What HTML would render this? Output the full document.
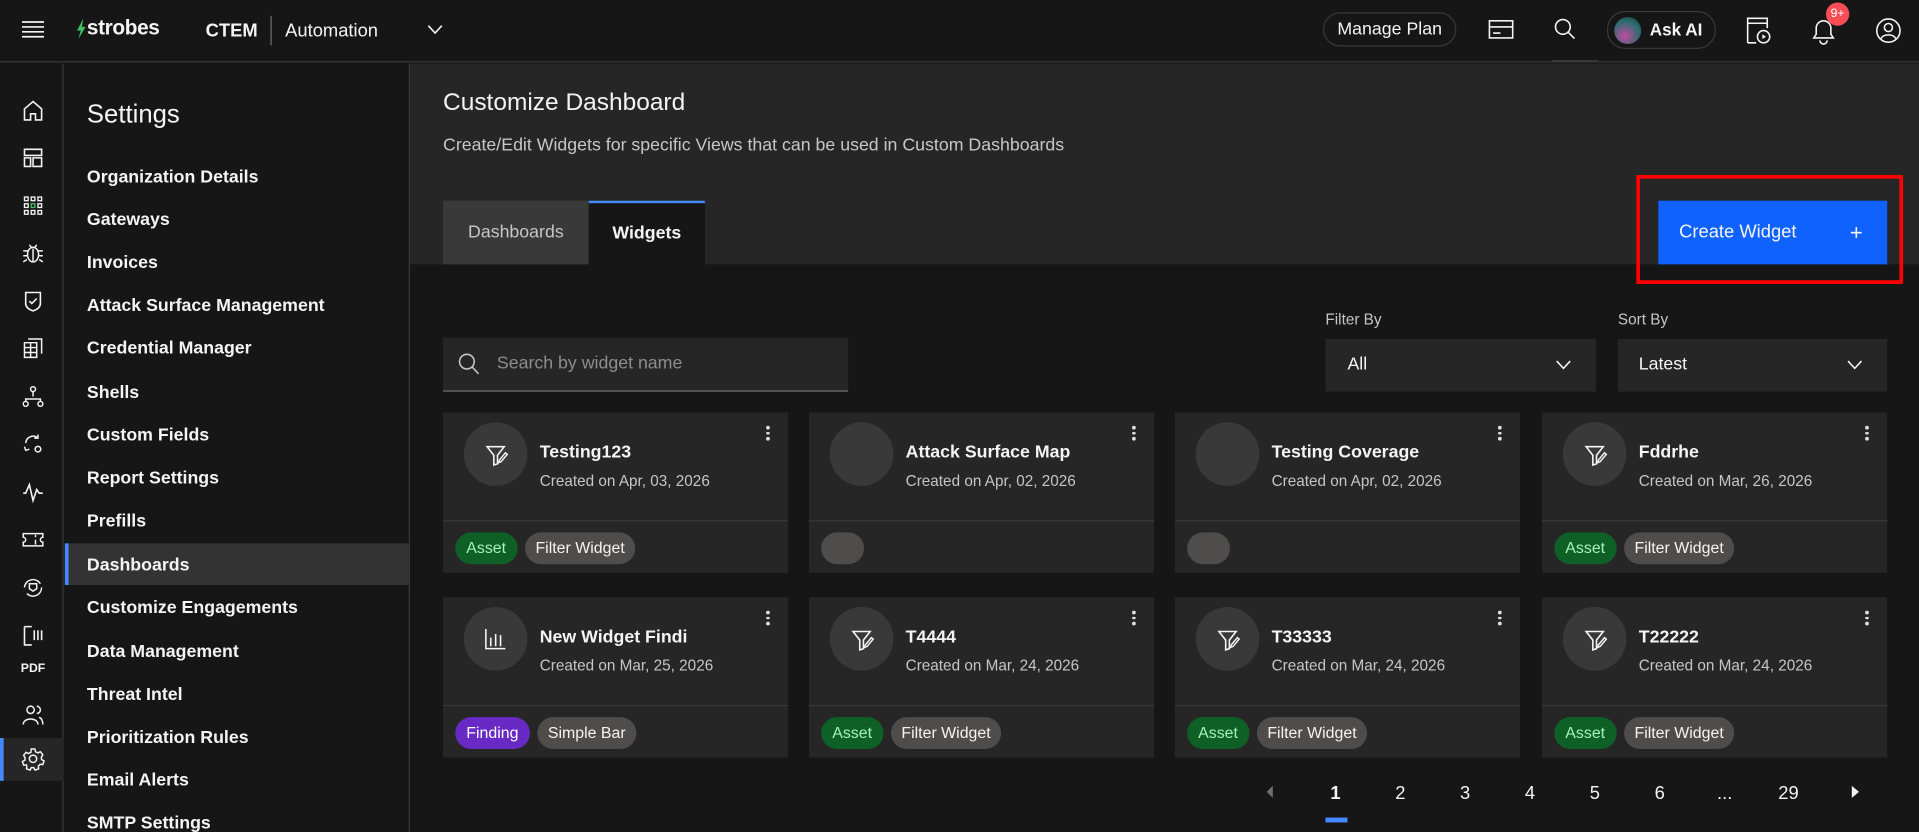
<!DOCTYPE html>
<html><head><meta charset="utf-8"><style>
*{box-sizing:border-box;margin:0;padding:0}
html,body{width:1919px;height:832px;overflow:hidden;background:#161616}
#r{position:absolute;left:0;top:0;width:1568px;height:680px;transform:scale(1.22385);transform-origin:0 0;font-family:"Liberation Sans",sans-serif;color:#f4f4f4;background:#161616;overflow:hidden}
.a{position:absolute}
.top{left:0;top:0;width:1568px;height:51px;background:#161616;border-bottom:1px solid #393939}
.rail{left:0;top:52px;width:52px;height:628px;border-right:1px solid #393939}
.side{left:53px;top:52px;width:282px;height:628px;border-right:1px solid #393939}
.item{position:absolute;left:18px;font-size:14.5px;font-weight:bold;color:#f4f4f4}
.ic{position:absolute;left:17px;width:20px;height:20px}
.card{position:absolute;width:282px;height:131px;background:#262626}
.card .div{position:absolute;left:0;top:88px;width:100%;height:1px;background:#393939}
.circ{position:absolute;left:17px;top:8px;width:52px;height:52px;border-radius:50%;background:#393939}
.ti{position:absolute;left:79px;top:25px;font-size:14.5px;font-weight:bold}
.dt{position:absolute;left:79px;top:49px;font-size:12.5px;color:#c6c6c6}
.kb{position:absolute;right:15px;top:11px;width:3px}
.kb i{display:block;width:2.5px;height:2.5px;background:#e0e0e0;border-radius:50%;margin-bottom:2px}
.tags{position:absolute;left:10px;top:98px}
.tag{display:inline-block;height:26px;line-height:26px;border-radius:13px;padding:0 9px;font-size:13px;margin-right:6px;vertical-align:top}
.as{background:#0e6027;color:#a7f0ba}.fw{background:#4f4c4c;color:#f4f4f4}.fi{background:#6929c4;color:#fff}.em{background:#4f4c4c;width:35px}
.pg{position:absolute;top:640px;font-size:15px;color:#f4f4f4}
</style></head><body><div id="r">
<div class="a top"></div>
<svg class="a" style="left:17px;top:16px" width="20" height="16" viewBox="0 0 20 16"><path d="M1 2h18M1 6h18M1 10h18M1 14h18" stroke="#f4f4f4" stroke-width="1.4"/></svg>
<svg class="a" style="left:62px;top:15px" width="9" height="17" viewBox="0 0 9 17"><path d="M6 0L1 10h3l-2 7 6-10H5z" fill="#42be65"/></svg>
<div class="a" style="left:71px;top:13px;font-size:17px;font-weight:bold;letter-spacing:-0.3px">strobes</div>
<div class="a" style="left:168px;top:17px;font-size:15px;font-weight:bold">CTEM</div>
<div class="a" style="left:221px;top:13px;width:1px;height:24px;background:#6f6f6f"></div>
<div class="a" style="left:233px;top:17px;font-size:15px">Automation</div>
<svg class="a" style="left:349px;top:20px" width="13" height="9"><path d="M1 1l5.5 6L12 1" stroke="#f4f4f4" fill="none" stroke-width="1.3"/></svg>
<div class="a" style="left:1081px;top:10px;width:109px;height:28px;border:1px solid #393939;border-radius:14px;font-size:14.5px;line-height:26px;text-align:center">Manage Plan</div>
<svg class="a" style="left:1216px;top:15px" width="21" height="18"><rect x="1" y="2" width="19" height="14" fill="none" stroke="#f4f4f4" stroke-width="1.3"/><path d="M1 7h19M4 12h6" stroke="#f4f4f4" stroke-width="1.3"/></svg>
<svg class="a" style="left:1269px;top:14px" width="20" height="20"><circle cx="8" cy="8" r="6" fill="none" stroke="#f4f4f4" stroke-width="1.3"/><path d="M12.5 12.5l5 5" stroke="#f4f4f4" stroke-width="1.3"/></svg>
<div class="a" style="left:1268px;top:49px;width:38px;height:2px;background:#393939"></div>
<div class="a" style="left:1313px;top:9px;width:89px;height:31px;border:1px solid #393939;border-radius:15px"></div>
<div class="a" style="left:1319px;top:14px;width:22px;height:22px;border-radius:50%;background:radial-gradient(circle at 40% 70%,#c04ba0,#2a6d6f 60%,#1d3b40)"></div>
<div class="a" style="left:1348px;top:16px;font-size:14px;font-weight:bold">Ask AI</div>
<svg class="a" style="left:1426px;top:13px" width="22" height="24"><path d="M2 22V2h16v8M2 6h16M2 22h7" stroke="#f4f4f4" fill="none" stroke-width="1.3"/><circle cx="15" cy="17" r="5" fill="none" stroke="#f4f4f4" stroke-width="1.3"/><path d="M14 15v4l3-2z" fill="#f4f4f4"/></svg>
<svg class="a" style="left:1479px;top:13px" width="22" height="24"><path d="M3 18h16l-2-3V10a6 6 0 0 0-12 0v5z" stroke="#f4f4f4" fill="none" stroke-width="1.3"/><path d="M8 20a3 3 0 0 0 6 0" stroke="#f4f4f4" fill="none" stroke-width="1.3"/></svg>
<div class="a" style="left:1492px;top:2px;width:19px;height:19px;border-radius:50%;background:#fa4d56;font-size:10px;line-height:19px;text-align:center;color:#fff">9+</div>
<svg class="a" style="left:1532px;top:14px" width="22" height="22"><circle cx="11" cy="11" r="9.5" fill="none" stroke="#f4f4f4" stroke-width="1.3"/><circle cx="11" cy="8.5" r="3.3" fill="none" stroke="#f4f4f4" stroke-width="1.3"/><path d="M5 17.5c2-4 10-4 12 0" stroke="#f4f4f4" fill="none" stroke-width="1.3"/></svg>

<div class="a rail">
<svg class="ic" style="top:28px" viewBox="0 0 20 20"><path d="M3 9l7-6 7 6v9H12v-5H8v5H3z" fill="none" stroke="#f4f4f4" stroke-width="1.3"/></svg>
<svg class="ic" style="top:67px" viewBox="0 0 20 20"><path d="M3 3h14v5H3zM3 10h5v7H3zM10 10h7v7h-7z" fill="none" stroke="#f4f4f4" stroke-width="1.3"/></svg>
<svg class="ic" style="top:106px" viewBox="0 0 20 20"><g fill="none" stroke="#f4f4f4" stroke-width="1.1"><rect x="3" y="3" width="3" height="3"/><rect x="8.5" y="3" width="3" height="3"/><rect x="14" y="3" width="3" height="3"/><rect x="3" y="8.5" width="3" height="3"/><rect x="8.5" y="8.5" width="3" height="3" stroke="#42be65"/><rect x="14" y="8.5" width="3" height="3"/><rect x="3" y="14" width="3" height="3"/><rect x="8.5" y="14" width="3" height="3"/><rect x="14" y="14" width="3" height="3"/></g></svg>
<svg class="ic" style="top:145px" viewBox="0 0 20 20"><g fill="none" stroke="#f4f4f4" stroke-width="1.2"><ellipse cx="10" cy="11" rx="4.5" ry="6"/><path d="M2 8h4M14 8h4M2 12h3.5M14.5 12h3.5M2 17l3-2M18 17l-3-2M7 3l1.5 2M13 3l-1.5 2M10 6v11"/></g></svg>
<svg class="ic" style="top:184px" viewBox="0 0 20 20"><path d="M4 3h12v9c0 3-3 5-6 6-3-1-6-3-6-6z M7 10l2 2 4-4" fill="none" stroke="#f4f4f4" stroke-width="1.3"/></svg>
<svg class="ic" style="top:223px" viewBox="0 0 20 20"><path d="M3 5h10v12H3zM6 2h11v12M3 9h10M3 13h10M8 5v12" fill="none" stroke="#f4f4f4" stroke-width="1.2"/></svg>
<svg class="ic" style="top:262px" viewBox="0 0 20 20"><g fill="none" stroke="#f4f4f4" stroke-width="1.2"><circle cx="10" cy="4" r="2"/><circle cx="4" cy="16" r="2"/><circle cx="16" cy="16" r="2"/><path d="M10 6v4M4 14v-2h12v2"/></g></svg>
<svg class="ic" style="top:301px" viewBox="0 0 20 20"><g fill="none" stroke="#f4f4f4" stroke-width="1.2"><path d="M4 9a6 6 0 0 1 10-4M14 2v3h-3M3 12l1 3 3-1"/><circle cx="14" cy="14" r="2.3"/></g></svg>
<svg class="ic" style="top:340px" viewBox="0 0 20 20"><path d="M2 11h2l3-7 3 13 3-9 2 3h3" fill="none" stroke="#f4f4f4" stroke-width="1.3"/></svg>
<svg class="ic" style="top:379px" viewBox="0 0 20 20"><path d="M2 5h16v3a2 2 0 0 0 0 4v3H2v-3a2 2 0 0 0 0-4z M12 6v2M12 10v4" fill="none" stroke="#f4f4f4" stroke-width="1.2"/></svg>
<svg class="ic" style="top:418px" viewBox="0 0 20 20"><g fill="none" stroke="#f4f4f4" stroke-width="1.2"><path d="M3 10a7 7 0 0 1 13-3M17 10a7 7 0 0 1-12 5"/><path d="M7 7h6v4l-3 2-3-2z"/></g></svg>
<svg class="ic" style="top:457px" viewBox="0 0 20 20"><path d="M3 3h6M3 3v15h6M11 6v8M14 6v8M17 6v8" fill="none" stroke="#f4f4f4" stroke-width="1.3"/></svg>
<div class="a" style="left:17px;top:489px;font-size:10px;font-weight:bold">PDF</div>
<svg class="ic" style="top:522px" viewBox="0 0 20 20"><g fill="none" stroke="#f4f4f4" stroke-width="1.2"><circle cx="8" cy="6" r="3"/><path d="M2 18c0-6 12-6 12 0M13 3a3 3 0 0 1 0 6M15 12c2 1 3 3 3 6"/></g></svg>
<div class="a" style="left:0;top:551px;width:52px;height:35px;background:#262626"></div>
<div class="a" style="left:0;top:551px;width:3px;height:35px;background:#4589ff"></div>
<svg class="ic" style="top:558px" viewBox="0 0 20 20"><g fill="none" stroke="#f4f4f4" stroke-width="1.2"><circle cx="10" cy="10" r="3"/><path d="M8.5 2h3l.5 2.2 2 1 2-1 2 2.5-1.2 2 .2 2 2 1-1 3-2.2-.2-1.5 1.5.3 2.2-3 1-1-2h-2l-1 2-3-1 .3-2.2L4.5 15l-2.2.2-1-3 2-1 .2-2-1.2-2 2-2.5 2 1 2-1z"/></g></svg>
</div>

<div class="a side">
<div class="a" style="left:18px;top:30px;font-size:21px">Settings</div>
<div class="a" style="left:0;top:392px;width:281px;height:34px;background:#333"></div>
<div class="a" style="left:0;top:392px;width:3px;height:34px;background:#4589ff"></div>
<div class="item" style="top:85px">Organization Details</div>
<div class="item" style="top:120px">Gateways</div>
<div class="item" style="top:155px">Invoices</div>
<div class="item" style="top:190px">Attack Surface Management</div>
<div class="item" style="top:225px">Credential Manager</div>
<div class="item" style="top:261px">Shells</div>
<div class="item" style="top:296px">Custom Fields</div>
<div class="item" style="top:331px">Report Settings</div>
<div class="item" style="top:366px">Prefills</div>
<div class="item" style="top:402px">Dashboards</div>
<div class="item" style="top:437px">Customize Engagements</div>
<div class="item" style="top:473px">Data Management</div>
<div class="item" style="top:508px">Threat Intel</div>
<div class="item" style="top:543px">Prioritization Rules</div>
<div class="item" style="top:578px">Email Alerts</div>
<div class="item" style="top:613px">SMTP Settings</div>
</div>

<div class="a" style="left:335px;top:52px;width:1233px;height:164px;background:#262626"></div>
<div class="a" style="left:362px;top:73px;font-size:20px">Customize Dashboard</div>
<div class="a" style="left:362px;top:111px;font-size:14.5px;color:#c6c6c6">Create/Edit Widgets for specific Views that can be used in Custom Dashboards</div>
<div class="a" style="left:362px;top:164px;width:119px;height:52px;background:#393939;color:#c6c6c6;font-size:14.5px;line-height:52px;text-align:center">Dashboards</div>
<div class="a" style="left:481px;top:164px;width:95px;height:52px;background:#161616;border-top:2px solid #4589ff;font-size:14.5px;font-weight:bold;line-height:50px;text-align:center">Widgets</div>
<div class="a" style="left:1337px;top:143px;width:218px;height:89px;border:3px solid #f00"></div>
<div class="a" style="left:1355px;top:164px;width:187px;height:52px;background:#0f62fe;font-size:15px;line-height:52px;padding-left:17px">Create Widget<span style="position:absolute;right:20px;font-size:18px">+</span></div>

<div class="a" style="left:362px;top:276px;width:331px;height:44px;background:#262626;border-bottom:1px solid #6f6f6f"></div>
<svg class="a" style="left:374px;top:288px" width="18" height="19"><circle cx="7.5" cy="7.5" r="6" fill="none" stroke="#c6c6c6" stroke-width="1.3"/><path d="M12 12l5 5.5" stroke="#c6c6c6" stroke-width="1.3"/></svg>
<div class="a" style="left:406px;top:289px;font-size:14.5px;color:#8d8d8d">Search by widget name</div>
<div class="a" style="left:1083px;top:254px;font-size:12.5px;color:#c6c6c6">Filter By</div>
<div class="a" style="left:1083px;top:277px;width:221px;height:43px;background:#262626;font-size:14.5px;line-height:43px;padding-left:18px">All</div>
<svg class="a" style="left:1271px;top:294px" width="13" height="9"><path d="M1 1l5.5 6L12 1" stroke="#f4f4f4" fill="none" stroke-width="1.3"/></svg>
<div class="a" style="left:1322px;top:254px;font-size:12.5px;color:#c6c6c6">Sort By</div>
<div class="a" style="left:1322px;top:277px;width:220px;height:43px;background:#262626;font-size:14.5px;line-height:43px;padding-left:17px">Latest</div>
<svg class="a" style="left:1509px;top:294px" width="13" height="9"><path d="M1 1l5.5 6L12 1" stroke="#f4f4f4" fill="none" stroke-width="1.3"/></svg>

<svg width="0" height="0" style="position:absolute"><defs><g id="fn"><path d="M5 6h14l-5.5 7v7l-3 1v-8z" fill="none" stroke="#f4f4f4" stroke-width="1.3"/><path d="M15 17l5-6 1.5 1.2-5 6-2 .8z" fill="none" stroke="#f4f4f4" stroke-width="1.2"/></g>
<g id="bar"><path d="M4 4v16h16M8 18v-7M12 18V8M16 18v-9" fill="none" stroke="#f4f4f4" stroke-width="1.3"/></g></defs></svg>

<div class="card" style="left:362px;top:337px"><div class="circ"></div><svg class="a" style="left:31px;top:22px" width="24" height="24"><use href="#fn"/></svg><div class="ti">Testing123</div><div class="dt">Created on Apr, 03, 2026</div><div class="kb"><i></i><i></i><i></i></div><div class="div"></div><div class="tags"><span class="tag as">Asset</span><span class="tag fw">Filter Widget</span></div></div>
<div class="card" style="left:661px;top:337px"><div class="circ"></div><div class="ti">Attack Surface Map</div><div class="dt">Created on Apr, 02, 2026</div><div class="kb"><i></i><i></i><i></i></div><div class="div"></div><div class="tags"><span class="tag em"></span></div></div>
<div class="card" style="left:960px;top:337px"><div class="circ"></div><div class="ti">Testing Coverage</div><div class="dt">Created on Apr, 02, 2026</div><div class="kb"><i></i><i></i><i></i></div><div class="div"></div><div class="tags"><span class="tag em"></span></div></div>
<div class="card" style="left:1260px;top:337px"><div class="circ"></div><svg class="a" style="left:31px;top:22px" width="24" height="24"><use href="#fn"/></svg><div class="ti">Fddrhe</div><div class="dt">Created on Mar, 26, 2026</div><div class="kb"><i></i><i></i><i></i></div><div class="div"></div><div class="tags"><span class="tag as">Asset</span><span class="tag fw">Filter Widget</span></div></div>
<div class="card" style="left:362px;top:488px"><div class="circ"></div><svg class="a" style="left:31px;top:22px" width="24" height="24"><use href="#bar"/></svg><div class="ti">New Widget Findi</div><div class="dt">Created on Mar, 25, 2026</div><div class="kb"><i></i><i></i><i></i></div><div class="div"></div><div class="tags"><span class="tag fi">Finding</span><span class="tag fw">Simple Bar</span></div></div>
<div class="card" style="left:661px;top:488px"><div class="circ"></div><svg class="a" style="left:31px;top:22px" width="24" height="24"><use href="#fn"/></svg><div class="ti">T4444</div><div class="dt">Created on Mar, 24, 2026</div><div class="kb"><i></i><i></i><i></i></div><div class="div"></div><div class="tags"><span class="tag as">Asset</span><span class="tag fw">Filter Widget</span></div></div>
<div class="card" style="left:960px;top:488px"><div class="circ"></div><svg class="a" style="left:31px;top:22px" width="24" height="24"><use href="#fn"/></svg><div class="ti">T33333</div><div class="dt">Created on Mar, 24, 2026</div><div class="kb"><i></i><i></i><i></i></div><div class="div"></div><div class="tags"><span class="tag as">Asset</span><span class="tag fw">Filter Widget</span></div></div>
<div class="card" style="left:1260px;top:488px"><div class="circ"></div><svg class="a" style="left:31px;top:22px" width="24" height="24"><use href="#fn"/></svg><div class="ti">T22222</div><div class="dt">Created on Mar, 24, 2026</div><div class="kb"><i></i><i></i><i></i></div><div class="div"></div><div class="tags"><span class="tag as">Asset</span><span class="tag fw">Filter Widget</span></div></div>

<svg class="a" style="left:1035px;top:642px" width="6" height="10"><path d="M5 0v10L0 5z" fill="#6f6f6f"/></svg>
<div class="pg" style="left:1087px;font-weight:bold">1</div>
<div class="a" style="left:1083px;top:668px;width:18px;height:4px;background:#4589ff"></div>
<div class="pg" style="left:1140px">2</div>
<div class="pg" style="left:1193px">3</div>
<div class="pg" style="left:1246px">4</div>
<div class="pg" style="left:1299px">5</div>
<div class="pg" style="left:1352px">6</div>
<div class="pg" style="left:1403px">...</div>
<div class="pg" style="left:1453px">29</div>
<svg class="a" style="left:1513px;top:642px" width="6" height="10"><path d="M0 0v10L6 5z" fill="#f4f4f4"/></svg>
</div></body></html>
